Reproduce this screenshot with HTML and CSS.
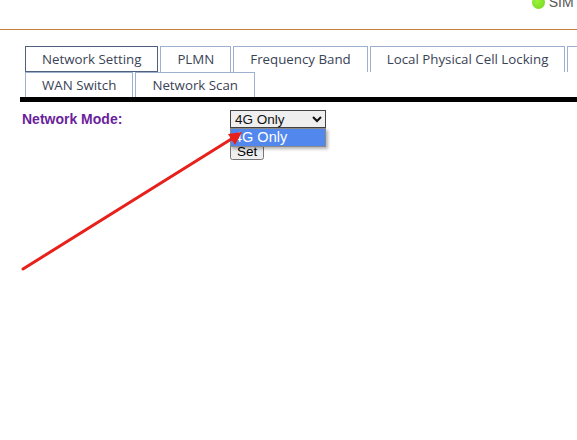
FILE: index.html
```html
<!DOCTYPE html>
<html lang="en">
<head>
    <meta charset="UTF-8">
    <meta name="viewport" content="width=device-width, initial-scale=1.0">
    <title>Network Setting</title>
    <link rel="stylesheet" href="styles.css">
</head>
<body>
    <div class="page">
        <!-- Status strip -->
        <div class="status-bar">
            <span class="sim-status"><span class="led"></span>SIM Ready</span>
        </div>

        <!-- Sub menu tabs -->
        <div class="tabs">
            <div class="tab-row">
                <a class="tab active">Network Setting</a>
                <a class="tab">PLMN</a>
                <a class="tab">Frequency Band</a>
                <a class="tab">Local Physical Cell Locking</a>
                <a class="tab">Cell Info</a>
            </div>
            <div class="tab-row second">
                <a class="tab">WAN Switch</a>
                <a class="tab">Network Scan</a>
            </div>
        </div>
        <div class="tab-line"></div>

        <!-- Network mode form -->
        <div class="form">
            <label class="form-label" for="netMode">Network Mode:</label>
            <div class="select-wrap">
                <select id="netMode" class="mode-select">
                    <option>4G Only</option>
                </select>
                <div class="dropdown">
                    <div class="dropdown-item selected">4G Only</div>
                </div>
            </div>
            <div class="form-actions">
                <button class="set-btn">Set</button>
            </div>
        </div>
    </div>

    <!-- Red pointer arrow -->
    <svg class="pointer" width="577" height="440" viewBox="0 0 577 440">
        <line x1="23" y1="269" x2="233" y2="138" stroke="#e8201c" stroke-width="3" stroke-linecap="round"/>
        <polygon points="242,132 228,134 235,145" fill="#e8201c"/>
    </svg>
</body>
</html>
```

FILE: styles.css
```css
body {
    margin: 0;
    padding: 0;
    background: #fff;
    font-family: "Liberation Sans", Arial, sans-serif;
    overflow: hidden;
}

.page {
    width: 700px;
}

/* Top status strip */
.status-bar {
    height: 29px;
    border-bottom: 1px solid #c0803c;
    display: flex;
    justify-content: flex-end;
    align-items: flex-start;
    overflow: hidden;
}

.sim-status {
    display: flex;
    align-items: center;
    gap: 4px;
    margin-top: -5px;
    margin-right: 82px;
    font-size: 14px;
    line-height: 14px;
    color: #555;
}

.led {
    width: 13px;
    height: 13px;
    border-radius: 50%;
    background: radial-gradient(circle at 40% 40%, #9cf23c, #72d41a);
}

/* Tabs */
.tabs {
    margin-top: 16px;
    padding-left: 25px;
    font-family: "Open Sans", "Noto Sans", sans-serif;
    font-size: 13.3px;
}

.tab-row {
    display: flex;
    gap: 2px;
    white-space: nowrap;
}

.tab {
    display: block;
    height: 25px;
    line-height: 25px;
    padding: 0 16px;
    color: #3a4356;
    border: 1px solid #9db0d0;
    border-bottom: none;
}

.tab.active {
    height: 24px;
    line-height: 24px;
    border-color: #4f5f80;
    border-bottom: 1px solid #4f5f80;
}

.tab-row.second .tab {
    height: 24px;
    line-height: 24px;
}

.tab-line {
    margin-left: 20px;
    height: 5px;
    background: #000;
}

/* Form */
.form {
    display: grid;
    grid-template-columns: 208px auto;
    padding: 8px 0 0 22px;
    align-items: center;
}

.form-label {
    font-size: 14px;
    font-weight: bold;
    color: #6b1f9c;
}

.select-wrap {
    position: relative;
    justify-self: start;
}

.mode-select {
    width: 96px;
    height: 18px;
    font-family: "Liberation Sans", Arial, sans-serif;
    font-size: 13.5px;
    color: #111;
    border-color: #444;
    display: block;
}

.dropdown {
    position: absolute;
    left: 0;
    top: 18px;
    width: 94px;
    border: 1px solid #8a8a8a;
    background: #fff;
    box-shadow: 2px 2px 3px rgba(0, 0, 0, 0.3);
    z-index: 2;
}

.dropdown-item {
    height: 17px;
    line-height: 17px;
    padding-left: 3px;
    font-size: 14.5px;
}

.dropdown-item.selected {
    background: #5288ee;
    color: #fff;
}

.form-actions {
    grid-column: 2;
    margin-top: 14px;
}

.set-btn {
    font-family: "Liberation Sans", Arial, sans-serif;
    font-size: 13.5px;
    padding: 1px 5px;
    height: 18px;
    line-height: 14px;
}

/* Annotation arrow over the page */
.pointer {
    position: absolute;
    left: 0;
    top: 0;
    z-index: 5;
    pointer-events: none;
}
```
